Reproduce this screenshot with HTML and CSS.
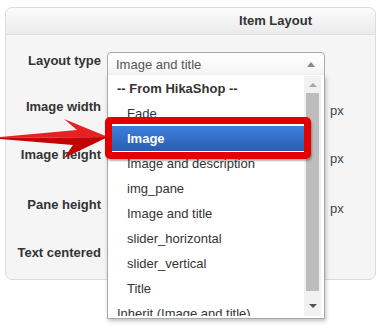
FILE: index.html
```html
<!DOCTYPE html>
<html lang="en">
<head>
    <meta charset="UTF-8">
    <title>Item Layout</title>
    <link rel="stylesheet" href="styles.css">
</head>
<body>
    <div class="page">
        <div class="panel">
            <div class="panel-head">Item Layout</div>
            <div class="panel-body">
                <!-- Layout type with open dropdown -->
                <div class="row row-1">
                    <div class="label">Layout type</div>
                    <div class="field">
                        <div class="select">
                            <span class="select-value">Image and title</span>
                            <span class="caret-up"></span>
                            <div class="popup">
                                <ul class="options">
                                    <li class="group">-- From HikaShop --</li>
                                    <li class="opt">Fade</li>
                                    <li class="opt selected">Image</li>
                                    <li class="opt">Image and description</li>
                                    <li class="opt">img_pane</li>
                                    <li class="opt">Image and title</li>
                                    <li class="opt">slider_horizontal</li>
                                    <li class="opt">slider_vertical</li>
                                    <li class="opt">Title</li>
                                    <li class="inherit">Inherit (Image and title)</li>
                                </ul>
                                <div class="scrollbar">
                                    <span class="sb-btn"><span class="sb-up"></span></span>
                                    <span class="sb-thumb"></span>
                                    <span class="sb-btn sb-bottom"><span class="sb-down"></span></span>
                                </div>
                            </div>
                        </div>
                    </div>
                </div>

                <div class="row row-2">
                    <div class="label">Image width</div>
                    <div class="field">
                        <div class="input"></div>
                        <span class="unit">px</span>
                    </div>
                </div>

                <div class="row row-3">
                    <div class="label">Image height</div>
                    <div class="field">
                        <div class="input"></div>
                        <span class="unit">px</span>
                    </div>
                </div>

                <div class="row row-4">
                    <div class="label">Pane height</div>
                    <div class="field">
                        <div class="input"></div>
                        <span class="unit">px</span>
                    </div>
                </div>

                <div class="row row-5">
                    <div class="label">Text centered</div>
                    <div class="field"></div>
                </div>
            </div>
        </div>

        <!-- Annotation -->
        <svg class="pointer" width="112" height="50" viewBox="0 0 112 50">
            <polygon points="0,27 77,20 64,9 108,27 0,28" fill="#e42222"/>
            <polygon points="0,28 108,27 64,48 73,35 0,29" fill="#c10404"/>
        </svg>
        <div class="highlight-box"></div>
    </div>
</body>
</html>
```

FILE: styles.css
```css
html, body {
    margin: 0;
    height: 100%;
}
body {
    font-family: "Liberation Sans", Arial, sans-serif;
    font-size: 13px;
    color: #333;
    background-color: #fff;
}
.page {
    position: relative;
    min-height: 335px;
    padding-top: 7px;
    box-sizing: border-box;
}
.panel {
    margin: 0 6px 0 5px;
    border: 1px solid #dcdcdc;
    border-radius: 7px;
    background-color: #f5f5f5;
}
.panel-head {
    height: 26px;
    line-height: 26px;
    padding-right: 63px;
    text-align: right;
    font-weight: bold;
    color: #333;
    background: linear-gradient(#fbfbfb, #ebebeb);
    border-bottom: 1px solid #dedede;
    border-radius: 7px 7px 0 0;
}
.panel-body {
    padding-top: 17px;
}
.row {
    display: grid;
    grid-template-columns: 95px 218px;
    column-gap: 6px;
}
.row-1 { height: 46px; position: relative; z-index: 2; }
.row-2 { height: 48px; }
.row-3 { height: 50px; }
.row-4 { height: 48px; }
.row-5 { height: 35px; }
.label {
    text-align: right;
    font-weight: bold;
    line-height: 18px;
    white-space: nowrap;
}
.field {
    display: flex;
    align-items: flex-start;
}
.input {
    flex: 0 0 218px;
    box-sizing: border-box;
    height: 26px;
    border: 1px solid #ccc;
    background-color: #fff;
}
.unit {
    margin-left: 5px;
    line-height: 26px;
    color: #444;
}

/* select with its open list */
.select {
    position: relative;
    box-sizing: border-box;
    width: 218px;
    height: 24px;
    border: 1px solid #a9a9a9;
    border-radius: 4px 4px 0 0;
    background: linear-gradient(#fff, #f4f4f4);
    display: flex;
    align-items: center;
}
.select-value {
    padding-left: 8px;
    color: #555;
    flex: 1;
}
.caret-up {
    width: 0;
    height: 0;
    margin-right: 9px;
    border-left: 4px solid transparent;
    border-right: 4px solid transparent;
    border-bottom: 5px solid #8a8a8a;
}
.popup {
    position: absolute;
    top: 22px;
    left: -1px;
    right: -1px;
    display: flex;
    padding: 1px 3px 2px 0;
    background-color: #fff;
    border: 1px solid #a9a9a9;
    border-top: none;
    box-shadow: 1px 2px 4px rgba(0,0,0,0.25);
}
.options {
    list-style: none;
    margin: 0;
    padding: 0;
    width: 196px;
    height: 240px;
    overflow: hidden;
}
.options li {
    height: 25px;
    line-height: 25px;
    padding-left: 9px;
    white-space: nowrap;
    color: #333;
}
.options .group {
    font-weight: bold;
}
.options .opt {
    padding-left: 19px;
}
.options .selected {
    color: #fff;
    font-weight: bold;
    background: linear-gradient(#3d7fdc, #2b5db3);
}
.scrollbar {
    width: 17px;
    height: 240px;
    background-color: #f1f1f1;
    display: flex;
    flex-direction: column;
    align-items: center;
}
.sb-btn {
    height: 17px;
    display: flex;
    align-items: center;
    justify-content: center;
}
.sb-bottom {
    margin-top: auto;
    height: 20px;
}
.sb-up {
    border-left: 4px solid transparent;
    border-right: 4px solid transparent;
    border-bottom: 4px solid #a6a6a6;
}
.sb-down {
    border-left: 4px solid transparent;
    border-right: 4px solid transparent;
    border-top: 4px solid #505050;
}
.sb-thumb {
    width: 13px;
    height: 198px;
    background-color: #bdbdbd;
}

/* red annotation */
.pointer {
    position: absolute;
    left: 0;
    top: 110px;
    z-index: 3;
}
.highlight-box {
    position: absolute;
    left: 105px;
    top: 117px;
    width: 206px;
    height: 42px;
    box-sizing: border-box;
    border: 7px solid #e20000;
    border-radius: 5px;
    box-shadow: 1px 2px 2px rgba(0,0,0,0.3);
    z-index: 4;
}
```
